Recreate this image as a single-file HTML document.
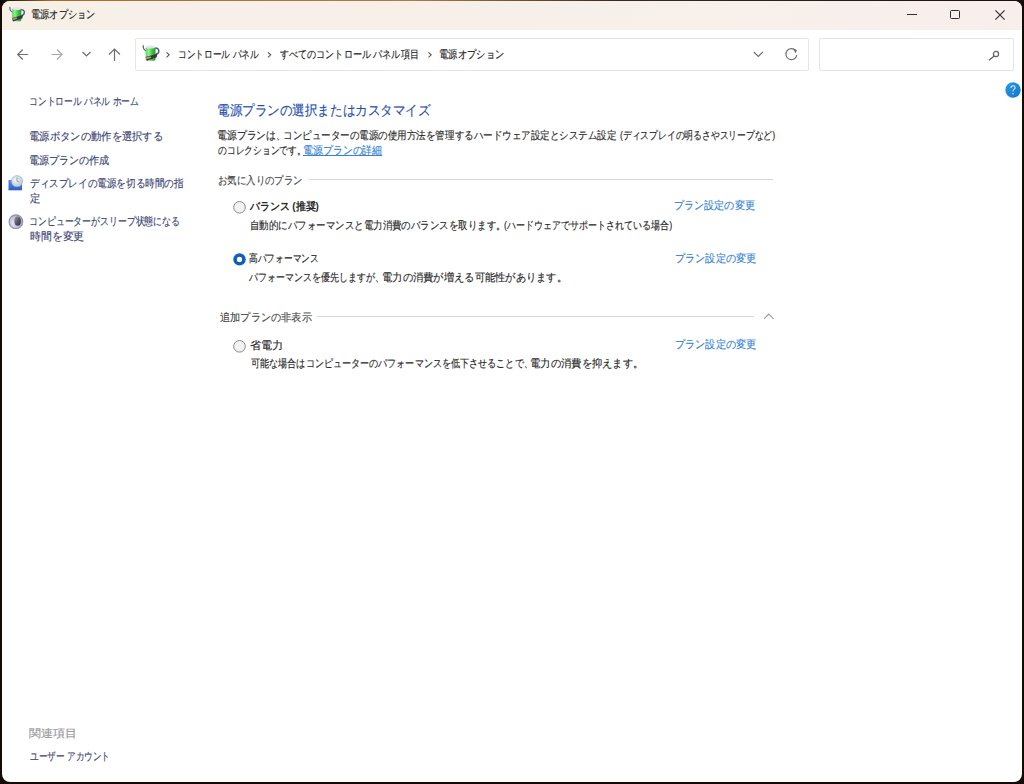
<!DOCTYPE html>
<html lang="ja"><head><meta charset="utf-8">
<style>
*{margin:0;padding:0;box-sizing:border-box}
html,body{width:1024px;height:784px;overflow:hidden;background:#140a08}
body{font-family:"Liberation Sans",sans-serif;font-size:12px;color:#262626;position:relative}
.bg{position:absolute;left:0;top:0;width:1024px;height:784px}
.win{position:absolute;left:0;top:0;width:1024px;height:784px}
.frame{position:absolute;left:2px;top:1px;width:1020px;height:781px;background:#fff;border-radius:8px;overflow:hidden}
.title{position:absolute;left:0;top:0;width:100%;height:29px;background:linear-gradient(90deg,#f6f0e7 0%,#f7f0ea 50%,#f8efec 100%)}
.t{position:absolute;white-space:nowrap;line-height:14px;transform-origin:0 0;-webkit-text-stroke:0.15px currentColor}
.nav{color:#3a3f72}
.lnk{color:#3382d4}
.svg{position:absolute}
</style></head><body>
<div class="bg" style="background:linear-gradient(90deg,#0a0a0a 0%,#a86a30 5%,#b07c48 40%,#3a2a20 60%,#1a1010 100%);height:2px"></div>
<div class="win">
  <div class="frame"><div class="title"></div></div>
  <!-- app icon -->
  <svg width="0" height="0" style="position:absolute"><defs>
  <linearGradient id="gg" x1="0" y1="0" x2="1" y2="0"><stop offset="0" stop-color="#5cd65c"/><stop offset="0.3" stop-color="#8cf08c"/><stop offset="0.7" stop-color="#3cbc3c"/><stop offset="1" stop-color="#2a9a2a"/></linearGradient>
  <symbol id="pw" viewBox="0 0 22 20">
    <path d="M3.9 3.4 Q3.6 7 6.8 8.4" stroke="#5e5a86" stroke-width="1.1" fill="none" stroke-linecap="round"/>
    <path d="M15 5.6 Q18.6 5.8 18.3 8.8 Q18 11.2 15.2 11.6" stroke="#57547e" stroke-width="1.4" fill="none"/>
    <rect x="6.1" y="4.2" width="9.2" height="13.1" rx="1.6" fill="url(#gg)"/>
    <ellipse cx="10.7" cy="4.7" rx="4.3" ry="1.4" fill="#dde6ee"/>
    <path d="M6.1 14 L17 10.9 L16.4 14.2 L7.2 17.4 Z" fill="#34344c"/>
    <ellipse cx="8.8" cy="14.6" rx="2.6" ry="0.9" transform="rotate(-15 8.8 14.6)" fill="#b8a060"/>
  </symbol></defs></svg>
  <svg class="svg" style="left:6px;top:4px" width="22" height="20"><use href="#pw"/></svg>
  <div class="t" id="ttl" style="left:31.2px;top:7.0px;color:#1c1c1c;font-size:11px;transform:scaleX(0.8380)">電源オプション</div>
  <!-- caption buttons -->
  <div style="position:absolute;left:907px;top:14.2px;width:10px;height:1.3px;background:#303030"></div>
  <div style="position:absolute;left:950.3px;top:10px;width:9.8px;height:9.3px;border:1.2px solid #303030;border-radius:1.5px"></div>
  <svg class="svg" style="left:995px;top:9.5px" width="10" height="10" viewBox="0 0 10 10"><path d="M0.4 0.4 L9.6 9.6 M9.6 0.4 L0.4 9.6" stroke="#303030" stroke-width="1.15"/></svg>

  <!-- nav arrows -->
  <svg class="svg" style="left:14px;top:47px" width="110" height="16" viewBox="0 0 110 16">
    <path d="M4.2 7.5 H14.2 M8.7 2.5 L3.7 7.5 L8.7 12.5" stroke="#6e6e6e" stroke-width="1.2" fill="none"/>
    <path d="M37.5 7.5 H47.5 M43 2.5 L48 7.5 L43 12.5" stroke="#a8a8a8" stroke-width="1.2" fill="none"/>
    <path d="M68.5 5 L72.5 9 L76.5 5" stroke="#6e6e6e" stroke-width="1.2" fill="none"/>
    <path d="M100.5 2 V14 M95 7.5 L100.5 2 L106 7.5" stroke="#6e6e6e" stroke-width="1.2" fill="none"/>
  </svg>
  <!-- address bar -->
  <div style="position:absolute;left:135px;top:38px;width:674px;height:33px;border:1px solid #e4e4e4;border-radius:2px"></div>
  <div style="position:absolute;left:819px;top:38px;width:195px;height:33px;border:1px solid #e4e4e4;border-radius:2px"></div>
  <svg class="svg" style="left:138.8px;top:42.2px" width="23.8" height="21.6" viewBox="0 0 22 20"><use href="#pw"/></svg>
  <svg class="svg" style="left:161.5px;top:47.5px" width="280" height="14" viewBox="0 0 280 14">
    <path d="M4.5 4.3 L7.2 6.8 L4.5 9.3" stroke="#555" stroke-width="1.1" fill="none"/>
    <path d="M106 4.3 L108.7 6.8 L106 9.3" stroke="#555" stroke-width="1.1" fill="none"/>
    <path d="M266.5 4.3 L269.2 6.8 L266.5 9.3" stroke="#555" stroke-width="1.1" fill="none"/>
  </svg>
  <div class="t" id="bc1" style="left:178.0px;top:46.5px;color:#1c1c1c;font-size:11px;transform:scaleX(0.7901)">コントロール パネル</div>
  <div class="t" id="bc2" style="left:280.0px;top:47.0px;color:#1c1c1c;font-size:11px;transform:scaleX(0.8253)">すべてのコントロール パネル項目</div>
  <div class="t" id="bc3" style="left:439.4px;top:47.0px;color:#1c1c1c;font-size:11px;transform:scaleX(0.8456)">電源オプション</div>
  <svg class="svg" style="left:750px;top:46.8px" width="52" height="16" viewBox="0 0 52 16">
    <path d="M3.8 5 L8.3 9.5 L12.8 5" stroke="#707070" stroke-width="1.1" fill="none"/>
    <path d="M45.5 3.5 A5.5 5.5 0 1 0 46.8 8" stroke="#707070" stroke-width="1.2" fill="none"/>
    <path d="M43 1.5 L47 3 L45.5 6.5 Z" fill="#707070"/>
  </svg>
  <svg class="svg" style="left:986px;top:48px" width="14" height="14" viewBox="0 0 14 14">
    <circle cx="10" cy="6" r="2.6" stroke="#606060" stroke-width="1.2" fill="none"/>
    <path d="M8.2 7.9 L3 12.2" stroke="#606060" stroke-width="1.3"/>
  </svg>
  <!-- help -->
  <svg class="svg" style="left:1005.3px;top:81.5px" width="16" height="16" viewBox="0 0 16 16">
    <defs><linearGradient id="gh" x1="0" y1="0" x2="1" y2="1"><stop offset="0" stop-color="#2c9ae8"/><stop offset="1" stop-color="#1274c8"/></linearGradient></defs>
    <circle cx="8" cy="8" r="7.7" fill="url(#gh)"/>
    <path d="M5.9 5.9 Q5.9 3.8 8 3.8 Q10.1 3.8 10.1 5.7 Q10.1 6.9 8.8 7.6 Q8 8.1 8 9.6" stroke="#d8ecfa" stroke-width="1.1" fill="none"/>
    <circle cx="8" cy="11.8" r="0.75" fill="#d8ecfa"/>
  </svg>

  <!-- left nav -->
  <div class="t nav" id="n1" style="left:28.8px;top:94.0px;font-size:11px;transform:scaleX(0.7957)">コントロール パネル ホーム</div>
  <div class="t nav" id="n2" style="left:28.8px;top:129.0px;font-size:11px;transform:scaleX(0.9380)">電源ボタンの動作を選択する</div>
  <div class="t nav" id="n3" style="left:28.8px;top:152.5px;font-size:11px;transform:scaleX(0.9154)">電源プランの作成</div>
  <svg class="svg" style="left:4px;top:173px" width="20" height="20" viewBox="0 0 20 20">
    <defs><linearGradient id="gd" x1="0" y1="0" x2="0" y2="1"><stop offset="0" stop-color="#5b8ae8"/><stop offset="1" stop-color="#2f5cc4"/></linearGradient>
    <radialGradient id="gc" cx="0.4" cy="0.4" r="0.6"><stop offset="0" stop-color="#f2f8fb"/><stop offset="1" stop-color="#b8ccd6"/></radialGradient></defs>
    <rect x="4.5" y="7" width="13.5" height="10.3" fill="url(#gd)"/>
    <circle cx="13" cy="8.2" r="5.6" fill="url(#gc)" stroke="#a0b2bc" stroke-width="0.7"/>
    <path d="M13 4.6 V8.2 L15.2 9" stroke="#6f8ea2" stroke-width="0.8" fill="none"/>
  </svg>
  <div class="t nav" id="n4" style="left:29.8px;top:176.0px;font-size:11px;transform:scaleX(0.8730)">ディスプレイの電源を切る時間の指</div>
  <div class="t nav" id="n4b" style="left:29.8px;top:191.0px;font-size:11px;transform:scaleX(0.9361)">定</div>
  <svg class="svg" style="left:4px;top:210px" width="20" height="20" viewBox="0 0 20 20">
    <defs><radialGradient id="gs" cx="0.35" cy="0.6" r="0.7"><stop offset="0" stop-color="#e8e8fa"/><stop offset="1" stop-color="#a6a8d8"/></radialGradient>
    <linearGradient id="gm" x1="0" y1="0" x2="1" y2="1"><stop offset="0" stop-color="#9a9a9e"/><stop offset="0.6" stop-color="#505056"/><stop offset="1" stop-color="#2e2e34"/></linearGradient></defs>
    <circle cx="11.9" cy="11.7" r="7.4" fill="#8e909c"/>
    <circle cx="11.9" cy="11.7" r="6.3" fill="url(#gs)"/>
    <ellipse cx="13.6" cy="11.2" rx="3.3" ry="4.6" fill="url(#gm)"/>
  </svg>
  <div class="t nav" id="n5" style="left:28.8px;top:214.0px;font-size:11px;transform:scaleX(0.8072)">コンピューターがスリープ状態になる</div>
  <div class="t nav" id="n5b" style="left:29.8px;top:229.0px;font-size:11px;transform:scaleX(0.9858)">時間を変更</div>
  <div class="t" id="rel" style="left:28.8px;top:725.5px;color:#969696;font-size:11px;transform:scaleX(1.0872)">関連項目</div>
  <div class="t nav" id="ua" style="left:29.8px;top:748.5px;font-size:11px;transform:scaleX(0.7839)">ユーザー アカウント</div>

  <!-- main -->
  <div class="t" id="h1" style="left:217.4px;top:101.0px;font-size:14px;line-height:18px;color:#1f4fae;transform:scaleX(0.8968)">電源プランの選択またはカスタマイズ</div>
  <div class="t" id="d1a" style="left:217.0px;top:128.0px;font-size:11px;transform:scaleX(0.8940)">電源プランは、</div>
  <div class="t" id="d1b" style="left:282.8px;top:128.0px;font-size:11px;transform:scaleX(0.8662)">コンピューターの電源の使用方法を管理するハードウェア設定とシステム設定</div>
  <div class="t" id="d1c" style="left:619.8px;top:128.0px;font-size:11px;transform:scaleX(0.7985)">(ディスプレイの明るさやスリープなど)</div>
  <div class="t" id="d2" style="left:218.0px;top:143.0px;font-size:11px;transform:scaleX(0.7961)">のコレクションです。</div>
  <div class="t lnk" id="d2l" style="left:302.8px;top:143.0px;text-decoration:underline;font-size:11px;transform:scaleX(0.9003)">電源プランの詳細</div>
  <div class="t" id="fav" style="left:217.8px;top:173.0px;color:#4a4a4a;font-size:11px;transform:scaleX(0.8557)">お気に入りのプラン</div>
  <div style="position:absolute;left:309px;top:179px;width:464px;height:1px;background:#d6d6d6"></div>

  <svg class="svg" style="left:233.2px;top:200.2px" width="16" height="16" viewBox="0 0 16 16"><circle cx="6.5" cy="7.3" r="5.8" fill="#f2f2f2" stroke="#8a8a8a" stroke-width="1"/></svg>
  <div class="t" id="p1" style="left:249.6px;top:199.0px;font-weight:bold;color:#2a2a2a;-webkit-text-stroke:0;font-size:11px;transform:scaleX(0.9005)">バランス (推奨)</div>
  <div class="t lnk" id="p1l" style="left:674.2px;top:198.0px;font-size:11px;transform:scaleX(0.9174)">プラン設定の変更</div>
  <div class="t" id="p1da" style="left:250.0px;top:218.0px;font-size:11px;transform:scaleX(0.8604)">自動的にパフォーマンスと電力消費のバランスを取ります。</div>
  <div class="t" id="p1db" style="left:503.6px;top:218.0px;font-size:11px;transform:scaleX(0.8196)">(ハードウェアでサポートされている場合)</div>

  <svg class="svg" style="left:233px;top:252px" width="16" height="16" viewBox="0 0 16 16"><circle cx="6.5" cy="7.4" r="6.2" fill="#0d5fc0"/><circle cx="6.5" cy="7.4" r="2.6" fill="#fff"/></svg>
  <div class="t" id="p2" style="left:248.8px;top:250.5px;color:#1c1c1c;font-size:11px;transform:scaleX(0.7937)">高パフォーマンス</div>
  <div class="t lnk" id="p2l" style="left:674.8px;top:251.0px;font-size:11px;transform:scaleX(0.9233)">プラン設定の変更</div>
  <div class="t" id="p2da" style="left:249.4px;top:270.0px;font-size:11px;transform:scaleX(0.8171)">パフォーマンスを優先しますが、</div>
  <div class="t" id="p2db" style="left:382.0px;top:270.0px;font-size:11px;transform:scaleX(0.9345)">電力の消費が増える可能性があります。</div>

  <div class="t" id="hid" style="left:219.6px;top:310.0px;color:#4a4a4a;font-size:11px;transform:scaleX(0.9270)">追加プランの非表示</div>
  <div style="position:absolute;left:317px;top:316px;width:437px;height:1px;background:#d6d6d6"></div>
  <svg class="svg" style="left:761.5px;top:310px" width="14" height="12" viewBox="0 0 14 12"><path d="M2 8.8 L6.8 4 L11.6 8.8" stroke="#9a9a9a" stroke-width="1.1" fill="none"/></svg>

  <svg class="svg" style="left:233.2px;top:339.2px" width="16" height="16" viewBox="0 0 16 16"><circle cx="6.5" cy="7.3" r="5.8" fill="#f2f2f2" stroke="#8a8a8a" stroke-width="1"/></svg>
  <div class="t" id="p3" style="left:249.6px;top:338.0px;color:#1c1c1c;font-size:11px;transform:scaleX(1.0075)">省電力</div>
  <div class="t lnk" id="p3l" style="left:674.8px;top:337.0px;font-size:11px;transform:scaleX(0.9233)">プラン設定の変更</div>
  <div class="t" id="p3da" style="left:251.0px;top:356.0px;font-size:11px;transform:scaleX(0.8261)">可能な場合はコンピューターのパフォーマンスを低下させることで、</div>
  <div class="t" id="p3db" style="left:530.2px;top:356.0px;font-size:11px;transform:scaleX(0.9369)">電力の消費を抑えます。</div>
</div>
</body></html>
